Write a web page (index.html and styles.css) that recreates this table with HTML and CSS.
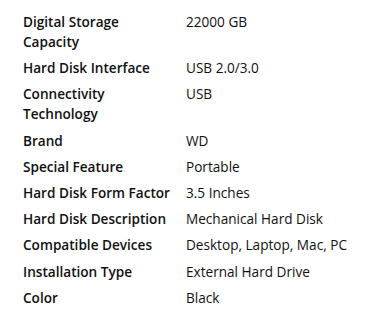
FILE: index.html
```html
<!DOCTYPE html>
<html lang="en">
<head>
    <meta charset="UTF-8">
    <meta name="viewport" content="width=device-width, initial-scale=1.0">
    <title>Product Overview</title>
    <link rel="stylesheet" href="styles.css">
</head>
<body>
    <div class="overview">
        <table class="spec-table">
            <tbody>
                <tr>
                    <td class="label">Digital Storage Capacity</td>
                    <td class="value">22000 GB</td>
                </tr>
                <tr>
                    <td class="label">Hard Disk Interface</td>
                    <td class="value">USB 2.0/3.0</td>
                </tr>
                <tr>
                    <td class="label">Connectivity Technology</td>
                    <td class="value">USB</td>
                </tr>
                <tr>
                    <td class="label">Brand</td>
                    <td class="value">WD</td>
                </tr>
                <tr>
                    <td class="label">Special Feature</td>
                    <td class="value">Portable</td>
                </tr>
                <tr>
                    <td class="label">Hard Disk Form Factor</td>
                    <td class="value">3.5 Inches</td>
                </tr>
                <tr>
                    <td class="label">Hard Disk Description</td>
                    <td class="value">Mechanical Hard Disk</td>
                </tr>
                <tr>
                    <td class="label">Compatible Devices</td>
                    <td class="value">Desktop, Laptop, Mac, PC</td>
                </tr>
                <tr>
                    <td class="label">Installation Type</td>
                    <td class="value">External Hard Drive</td>
                </tr>
                <tr>
                    <td class="label">Color</td>
                    <td class="value">Black</td>
                </tr>
            </tbody>
        </table>
    </div>
</body>
</html>
```

FILE: styles.css
```css
body {
    font-family: 'Open Sans', 'Noto Sans', sans-serif;
    background: #fff;
    margin: 0;
    color: #0f1111;
}
.overview {
    padding: 9px 0 0 23px;
}
.spec-table {
    border-collapse: collapse;
    font-size: 13.6px;
    line-height: 20px;
}
.spec-table td {
    padding: 3.1px 0;
    vertical-align: top;
    text-align: left;
}
.spec-table .label {
    width: 155px;
    padding-right: 8px;
    font-weight: 650;
}
.value {
    font-weight: normal;
}
```
